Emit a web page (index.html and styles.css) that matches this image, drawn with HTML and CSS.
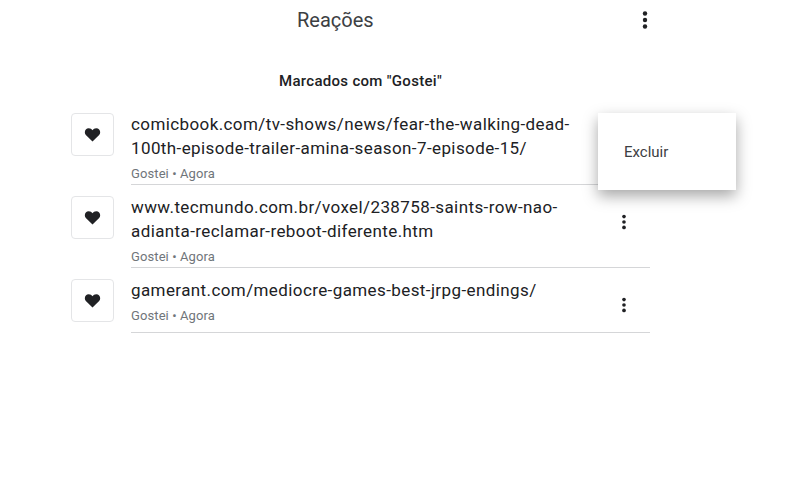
FILE: index.html
```html
<!DOCTYPE html>
<html lang="pt-BR">
<head>
    <meta charset="UTF-8">
    <meta name="viewport" content="width=device-width, initial-scale=1.0">
    <title>Reações</title>
    <link rel="stylesheet" href="styles.css">
</head>
<body>
    <header class="top-bar">
        <h1>Reações</h1>
        <button class="more top-more" aria-label="Mais opções">
            <svg viewBox="0 0 24 24"><circle cx="12" cy="5.500" r="2.200"/><circle cx="12" cy="12" r="2.200"/><circle cx="12" cy="18.500" r="2.200"/></svg>
        </button>
    </header>

    <main class="content">
        <h2>Marcados com "Gostei"</h2>

        <ul class="list">
            <li class="item">
                <div class="icon-box">
                    <svg width="17" height="17" viewBox="0 0 24 24"><path d="M12 22 2.600 12.600C-.4 9.400 1.400 3 6.800 3c2.200 0 4 1 5.200 3 1.200-2 3-3 5.200-3 5.400 0 7.200 6.400 4.200 9.600z"/></svg>
                </div>
                <div class="item-body">
                    <div class="item-text">
                        <a class="url">comicbook.com/tv-shows/news/fear-the-walking-dead-100th-episode-trailer-amina-season-7-episode-15/</a>
                        <p class="meta">Gostei • Agora</p>
                    </div>
                </div>
                <div class="menu"><span>Excluir</span></div>
            </li>
            <li class="item">
                <div class="icon-box">
                    <svg width="17" height="17" viewBox="0 0 24 24"><path d="M12 22 2.600 12.600C-.4 9.400 1.400 3 6.800 3c2.200 0 4 1 5.200 3 1.200-2 3-3 5.200-3 5.400 0 7.200 6.400 4.200 9.600z"/></svg>
                </div>
                <div class="item-body">
                    <div class="item-text">
                        <a class="url">www.tecmundo.com.br/voxel/238758-saints-row-nao-adianta-reclamar-reboot-diferente.htm</a>
                        <p class="meta">Gostei • Agora</p>
                    </div>
                    <button class="more" aria-label="Mais opções">
                        <svg viewBox="0 0 24 24"><circle cx="12" cy="5.500" r="2.200"/><circle cx="12" cy="12" r="2.200"/><circle cx="12" cy="18.500" r="2.200"/></svg>
                    </button>
                </div>
            </li>
            <li class="item">
                <div class="icon-box">
                    <svg width="17" height="17" viewBox="0 0 24 24"><path d="M12 22 2.600 12.600C-.4 9.400 1.400 3 6.800 3c2.200 0 4 1 5.200 3 1.200-2 3-3 5.200-3 5.400 0 7.200 6.400 4.200 9.600z"/></svg>
                </div>
                <div class="item-body">
                    <div class="item-text">
                        <a class="url">gamerant.com/mediocre-games-best-jrpg-endings/</a>
                        <p class="meta">Gostei • Agora</p>
                    </div>
                    <button class="more" aria-label="Mais opções">
                        <svg viewBox="0 0 24 24"><circle cx="12" cy="5.500" r="2.200"/><circle cx="12" cy="12" r="2.200"/><circle cx="12" cy="18.500" r="2.200"/></svg>
                    </button>
                </div>
            </li>
        </ul>
    </main>
</body>
</html>
```

FILE: styles.css
```css
* {
    margin: 0;
    padding: 0;
    box-sizing: border-box;
}

body {
    font-family: 'Roboto', 'Liberation Sans', sans-serif;
    background: #fff;
    color: #202124;
}

.top-bar {
    display: flex;
    align-items: center;
    justify-content: space-between;
    height: 40px;
    padding: 0 143px 0 297px;
}

h1 {
    font-size: 20px;
    font-weight: 400;
    color: #3c4043;
}

.more {
    flex: none;
    display: flex;
    border: none;
    background: none;
    fill: #202124;
    width: 20px;
    height: 20px;
}

.top-more {
    width: 24px;
    height: 24px;
}

.content {
    width: 579px;
    margin-left: 71px;
    padding-top: 32px;
}

h2 {
    font-size: 15px;
    font-weight: 500;
    line-height: 18px;
    letter-spacing: 0.3px;
    text-align: center;
    margin-bottom: 12px;
}

.list {
    list-style: none;
}

.item {
    position: relative;
    display: flex;
    gap: 17px;
}

.icon-box {
    flex: none;
    display: flex;
    align-items: center;
    justify-content: center;
    width: 43px;
    height: 43px;
    margin: 11px 0;
    border: 1px solid #e4e5e7;
    border-radius: 4px;
    fill: #202124;
}

.item-body {
    flex: 1;
    display: flex;
    align-items: flex-start;
    border-bottom: 1px solid #d5d6d8;
    padding: 10px 0 2px;
}

.item-text {
    width: 450px;
}

.url {
    display: block;
    font-size: 17px;
    line-height: 24px;
    letter-spacing: 0.4px;
    color: #202124;
}

.meta {
    font-size: 13px;
    line-height: 17px;
    letter-spacing: 0.1px;
    margin-top: 5px;
    color: #70757a;
}

.item-body .more {
    margin-left: 33px;
    margin-top: 17px;
}

.menu {
    position: absolute;
    left: 527px;
    top: 11px;
    width: 138px;
    height: 77px;
    background: #fff;
    box-shadow: 0 6px 14px rgba(0, 0, 0, 0.35);
    display: flex;
    align-items: center;
    padding-left: 26px;
    font-size: 15px;
    color: #3c4043;
}
```
